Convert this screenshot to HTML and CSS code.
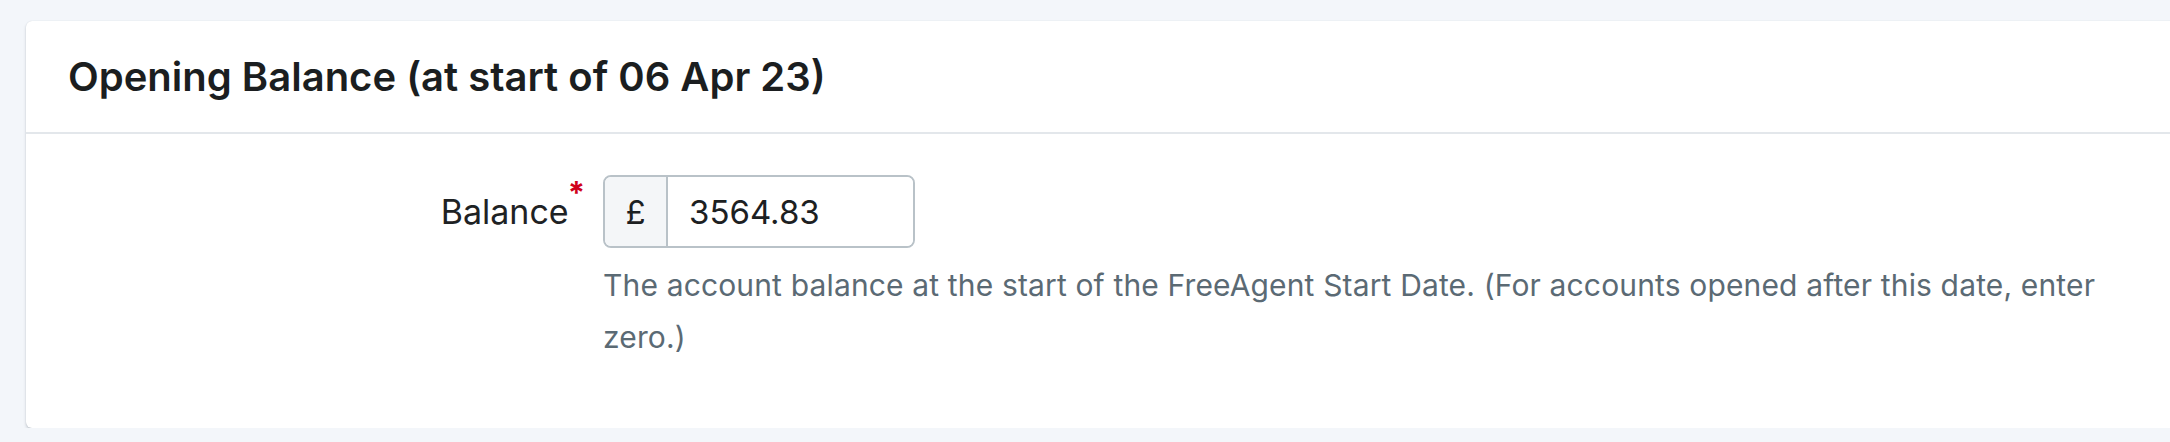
FILE: index.html
```html
<!DOCTYPE html>
<html lang="en">
<head>
<meta charset="utf-8">
<title>Opening Balance</title>
<link rel="stylesheet" href="styles.css">
</head>
<body>
<main class="page">
  <section class="card">
    <header class="card-header">
      <h2 class="card-title">Opening Balance (at start of 06 Apr 23)</h2>
    </header>
    <div class="card-body">
      <div class="field">
        <label class="field-label" for="balance">Balance<span class="required">*</span></label>
        <div class="field-control">
          <div class="input-group">
            <span class="input-prefix">£</span>
            <input class="input" id="balance" type="text" value="3564.83">
          </div>
          <p class="help">The account balance at the start of the FreeAgent Start Date. (For accounts opened after this date, enter zero.)</p>
        </div>
      </div>
    </div>
  </section>
</main>
</body>
</html>
```

FILE: styles.css
```css
* { box-sizing: border-box; }

html, body {
  margin: 0;
  padding: 0;
  background: #f3f6fa;
  overflow: hidden;
}

body {
  font-family: "Inter", "Lato", sans-serif;
  color: #1c2022;
}

.page {
  padding: 21px 0 0 26px;
  width: 2260px;
}

.card {
  background: #ffffff;
  border-radius: 6px;
  box-shadow: 0 2px 3px rgba(40, 55, 70, 0.22), 0 0 1px rgba(40, 55, 70, 0.18);
  height: 407px;
}

.card-header {
  height: 113px;
  display: flex;
  align-items: center;
  padding-left: 42px;
  border-bottom: 2px solid #e3e7eb;
}

.card-title {
  margin: 0;
  font-size: 40px;
  font-weight: 600;
  color: #1b1e20;
  line-height: 1;
}

.card-body {
  padding-top: 41px;
}

.field {
  display: grid;
  grid-template-columns: 562px 1fr;
  column-gap: 15px;
}

.field-label {
  text-align: right;
  font-size: 34px;
  line-height: 73px;
  color: #1e2224;
  padding-right: 3px;
}

.required {
  color: #d0021b;
  font-size: 31px;
  font-weight: 700;
  position: relative;
  top: -20px;
  margin-left: -1px;
}

.field-control {
  width: 1560px;
}

.input-group {
  display: flex;
  width: 312px;
  height: 73px;
  border: 2px solid #b9c2c8;
  border-radius: 8px;
  overflow: hidden;
}

.input-prefix {
  width: 63px;
  background: #f4f6f8;
  border-right: 2px solid #b9c2c8;
  display: flex;
  align-items: center;
  justify-content: center;
  font-size: 33px;
  color: #1c2022;
}

.input {
  flex: 1;
  border: 0;
  outline: none;
  padding: 0 0 0 21px;
  font-family: inherit;
  font-size: 33px;
  color: #1c2022;
  background: #fff;
  min-width: 0;
}

.help {
  margin: 11px 0 0;
  font-size: 30px;
  line-height: 52px;
  letter-spacing: 0.15px;
  color: #5b6a74;
}
```
